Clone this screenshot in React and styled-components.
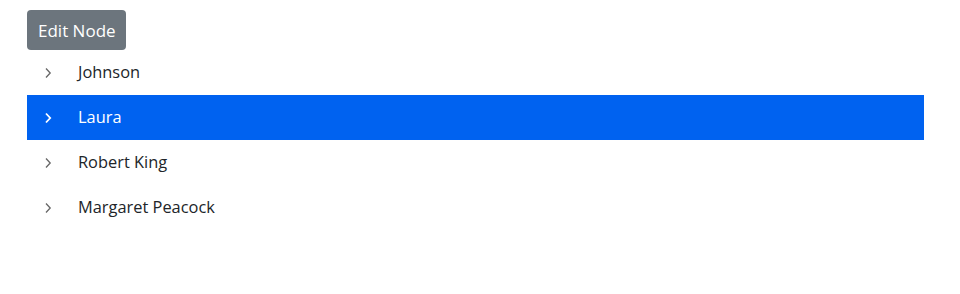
import React, { useState } from 'react'
import styled, { createGlobalStyle } from 'styled-components'

const GlobalStyle = createGlobalStyle`
  body {
    margin: 0;
    background: #fff;
    font-family: "Open Sans", "Noto Sans", sans-serif;
  }
`

const Page = styled.div`
  padding: 10px 36px 0 27px;
`

const EditButton = styled.button`
  display: block;
  height: 40px;
  padding: 0 10px 0 11px;
  border: none;
  border-radius: 4px;
  background: #6c757d;
  color: #fff;
  font-family: inherit;
  font-size: 17px;
  cursor: pointer;
`

const Tree = styled.ul`
  list-style: none;
  margin: 0;
  padding: 0;
`

const Row = styled.li`
  display: flex;
  align-items: center;
  height: 45px;
  padding-left: 15px;
  background: ${p => (p.$selected ? '#0062f0' : 'transparent')};
  color: ${p => (p.$selected ? '#fff' : '#212529')};
  font-size: 16.4px;
  cursor: pointer;
`

const Chevron = styled.svg`
  width: 12px;
  height: 12px;
  margin-right: 24px;
  flex: none;
`

const Label = styled.span`
  line-height: 1;
`

const nodes = ['Johnson', 'Laura', 'Robert King', 'Margaret Peacock']

export default function App() {
  const [selected, setSelected] = useState(1)
  return (
    <Page>
      <GlobalStyle />
      <EditButton>Edit Node</EditButton>
      <Tree>
        {nodes.map((name, i) => (
          <Row key={name} $selected={i === selected} onClick={() => setSelected(i)}>
            <Chevron viewBox="0 0 12 12">
              <path
                d="M4 1.5 L8.2 6 L4 10.5"
                fill="none"
                stroke={i === selected ? '#fff' : '#666'}
                strokeWidth={i === selected ? 1.8 : 1.3}
              />
            </Chevron>
            <Label>{name}</Label>
          </Row>
        ))}
      </Tree>
    </Page>
  )
}
